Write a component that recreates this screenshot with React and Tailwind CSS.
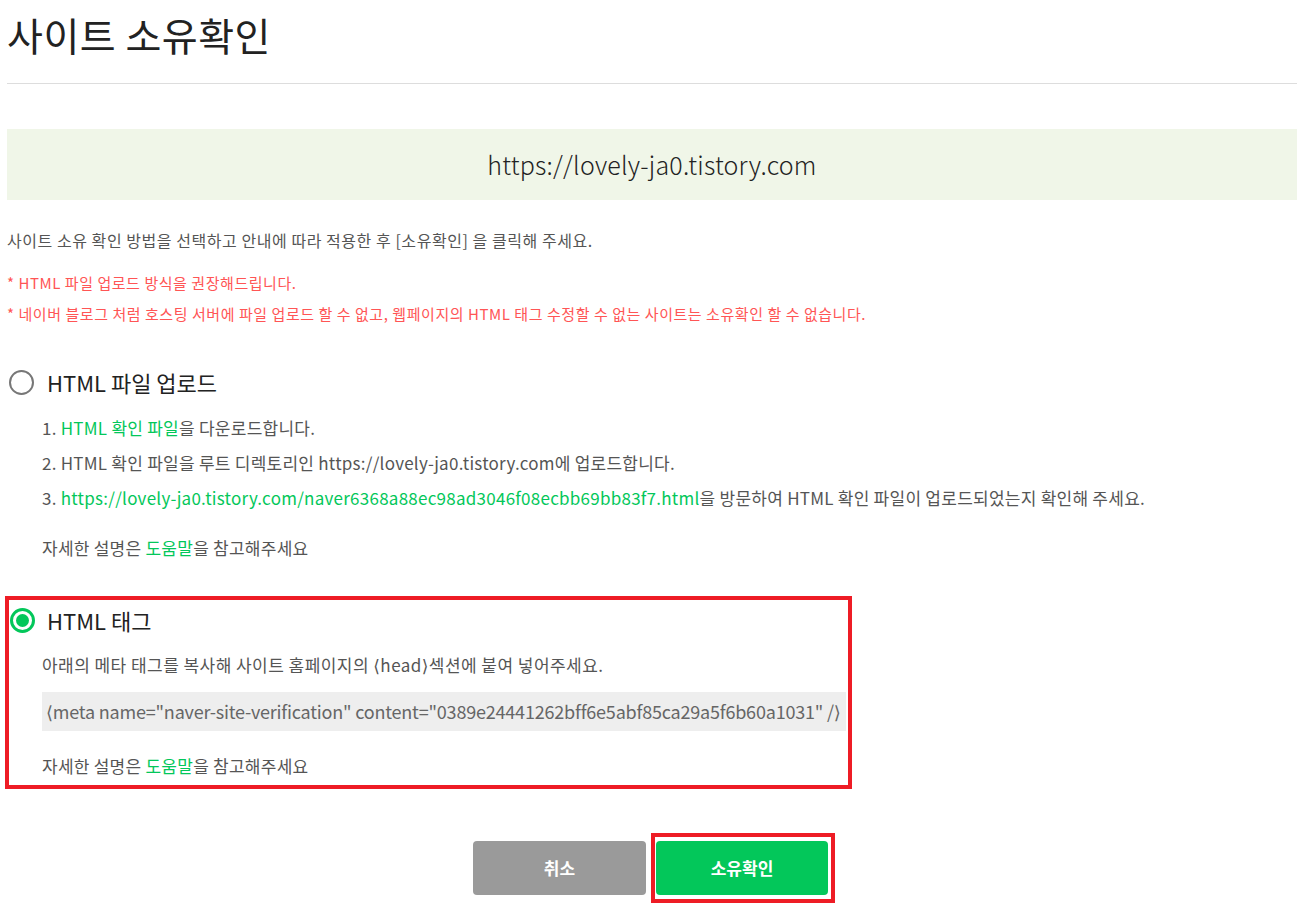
export default function App() {
    const font = { fontFamily: '"Noto Sans CJK KR", "Noto Sans", sans-serif' };

    return (
        <div className="min-h-screen bg-white px-[7px] pt-[8px] pb-[10px] text-[#333]" style={font}>
            <h1 className="text-[39px] leading-[52px] font-normal text-[#222] tracking-[0.5px]">사이트 소유확인</h1>
            <div className="mt-[23px] mr-[4px] border-t border-[#dddddd]"></div>

            <div className="mt-[45px] mr-[4px] h-[71px] flex items-center justify-center bg-[#f0f6e8]">
                <span className="text-[25px] font-light text-[#222] tracking-[0.2px]">https://lovely-ja0.tistory.com</span>
            </div>

            <p className="mt-[28px] text-[16px] leading-[24px] text-[#555] tracking-[0.55px]">
                사이트 소유 확인 방법을 선택하고 안내에 따라 적용한 후 [소유확인] 을 클릭해 주세요.
            </p>
            <p className="mt-[21px] text-[15px] leading-[20px] text-[#ff5555] tracking-[0.55px]">* HTML 파일 업로드 방식을 권장해드립니다.</p>
            <p className="mt-[11px] text-[15px] leading-[20px] text-[#ff5555] tracking-[0.55px]">
                * 네이버 블로그 처럼 호스팅 서버에 파일 업로드 할 수 없고, 웹페이지의 HTML 태그 수정할 수 없는 사이트는 소유확인 할 수 없습니다.
            </p>

            {/* html file upload */}
            <div className="mt-[43px] h-[30px] flex items-center gap-[13px] pl-[2px]">
                <span className="w-[25px] h-[25px] rounded-full border-2 border-[#777]"></span>
                <span className="text-[22px] leading-[30px] text-[#222]">HTML 파일 업로드</span>
            </div>
            <div className="pl-[35px] text-[17px] text-[#555] tracking-[0.25px] leading-[35px] mt-[13px]">
                <p>1. <span className="text-[#03c75a]">HTML 확인 파일</span>을 다운로드합니다.</p>
                <p>2. HTML 확인 파일을 루트 디렉토리인 https://lovely-ja0.tistory.com에 업로드합니다.</p>
                <p>3. <span className="text-[#03c75a]">https://lovely-ja0.tistory.com/naver6368a88ec98ad3046f08ecbb69bb83f7.html</span>을 방문하여 HTML 확인 파일이 업로드되었는지 확인해 주세요.</p>
                <p className="mt-[15px]">자세한 설명은 <span className="text-[#03c75a]">도움말</span>을 참고해주세요</p>
            </div>

            {/* html tag - selected */}
            <div className="mt-[31px] ml-[-2px] w-[847px] border-[4px] border-[#ee1c25] pt-[5px] pb-[7px]">
                <div className="h-[30px] flex items-center gap-[12px] pl-[1px]">
                    <span className="w-[25px] h-[25px] rounded-full border-[3px] border-[#03c75a] flex items-center justify-center">
                        <span className="w-[13px] h-[13px] rounded-full bg-[#03c75a]"></span>
                    </span>
                    <span className="text-[22px] leading-[30px] text-[#222]">HTML 태그</span>
                </div>
                <div className="pl-[33px] pr-[2px] text-[17px] leading-[24px] text-[#555] tracking-[0.45px]">
                    <p className="mt-[18px]">
                        아래의 메타 태그를 복사해 사이트 홈페이지의 <span className="font-['DejaVu_Sans'] text-[17px]">⟨</span>head<span className="font-['DejaVu_Sans'] text-[17px]">⟩</span>섹션에 붙여 넣어주세요.
                    </p>
                    <div className="mt-[14px] h-[39px] bg-[#eeeeee] flex items-center px-[4px] text-[#666]">
                        <span className="whitespace-nowrap text-[18px] tracking-[-0.2px]">
                            <span className="font-['DejaVu_Sans']">⟨</span>meta name="naver-site-verification" content="0389e24441262bff6e5abf85ca29a5f6b60a1031" /<span className="font-['DejaVu_Sans']">⟩</span>
                        </span>
                    </div>
                    <p className="mt-[23px] tracking-[0.25px]">자세한 설명은 <span className="text-[#03c75a]">도움말</span>을 참고해주세요</p>
                </div>
            </div>

            <div className="mt-[44px] flex justify-center items-center gap-[5px]">
                <button className="w-[173px] h-[54px] rounded-[4px] bg-[#9a9a9a] text-white text-[17px] font-bold">취소</button>
                <div className="border-[4px] border-[#ee1c25] pl-[1px] pr-[3px] py-[4px]">
                    <button className="w-[172px] h-[54px] rounded-[4px] bg-[#03c75a] text-white text-[17px] font-bold">소유확인</button>
                </div>
            </div>
        </div>
    );
}
